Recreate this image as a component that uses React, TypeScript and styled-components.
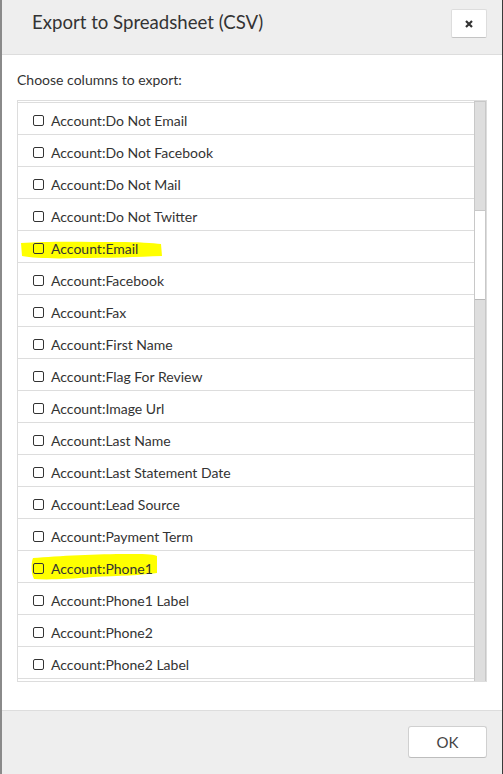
import React from "react";
import styled, { createGlobalStyle } from "styled-components";

const GlobalStyle = createGlobalStyle`
  html, body {
    margin: 0;
    padding: 0;
    background: #6f6f6f;
    font-family: Lato, "Open Sans", "Liberation Sans", sans-serif;
  }
  * { box-sizing: border-box; }
`;

const Page = styled.div`
  width: 503px;
  height: 774px;
  display: flex;
  padding: 0 1px 0 2px;
  background: linear-gradient(to right, #8a8a8a 0 2px, #3a3a3a 2px);
`;

const Dialog = styled.div`
  flex: 1;
  display: flex;
  flex-direction: column;
  background: #ffffff;
`;

const Header = styled.div`
  height: 55px;
  flex: none;
  display: flex;
  align-items: flex-start;
  justify-content: space-between;
  padding: 9px 15px 0 30px;
  background: #eeeeee;
  border-bottom: 1px solid #dddddd;
`;

const Title = styled.h4`
  margin: -1px 0 0;
  font-size: 18.6px;
  line-height: 29px;
  font-weight: 400;
  color: #333333;
`;

const CloseButton = styled.button`
  width: 36px;
  height: 29px;
  padding: 0;
  display: flex;
  align-items: center;
  justify-content: center;
  background: #ffffff;
  border: 1px solid #dddddd;
  border-bottom-color: #c4c4c4;
  border-radius: 2px;
  cursor: pointer;
`;

const Body = styled.div`
  flex: 1;
  display: flex;
  flex-direction: column;
  padding: 15px 15px 0;
`;

const Label = styled.div`
  font-size: 14px;
  line-height: 20px;
  color: #333333;
  margin-bottom: 10px;
`;

const ListBox = styled.div`
  height: 582px;
  display: flex;
  border: 1px solid #dddddd;
`;

const Viewport = styled.div`
  flex: 1;
  overflow: hidden;
`;

const Rows = styled.div`
  margin-top: -30px;
  display: flex;
  flex-direction: column;
`;

const Row = styled.div`
  position: relative;
  height: 32px;
  flex: none;
  display: flex;
  align-items: center;
  gap: 7px;
  padding: 3px 0 0 15px;
  border-bottom: 1px solid #dddddd;
  font-size: 14px;
  color: #333333;
`;

const Box = styled.span`
  position: relative;
  z-index: 1;
  width: 11px;
  height: 11px;
  flex: none;
  border: 1.3px solid #333333;
  border-radius: 2px;
`;

const RowText = styled.span`
  position: relative;
  z-index: 1;
`;

const Marker = styled.svg`
  position: absolute;
  left: 0;
  top: 0;
  width: 100%;
  height: 100%;
  overflow: visible;
  pointer-events: none;
`;

const Scrollbar = styled.div`
  width: 12px;
  flex: none;
  display: flex;
  flex-direction: column;
  background: #dedede;
  border-left: 1px solid #c8c8c8;
  border-right: 1px solid #c8c8c8;
  border-top: 1px solid #c8c8c8;
`;

const Thumb = styled.div`
  margin-top: 108px;
  height: 90px;
  background: #ffffff;
  border-top: 1px solid #c8c8c8;
  border-bottom: 1px solid #b8b8b8;
`;

const Footer = styled.div`
  height: 64px;
  flex: none;
  display: flex;
  justify-content: flex-end;
  align-items: flex-start;
  padding: 15px 15px 0;
  background: #eeeeee;
  border-top: 1px solid #dddddd;
`;

const OkButton = styled.button`
  width: 79px;
  height: 32px;
  background: #ffffff;
  border: 1px solid #d0d0d0;
  border-bottom-color: #bdbdbd;
  border-radius: 3px;
  font-family: Lato, "Open Sans", "Liberation Sans", sans-serif;
  font-size: 15px;
  color: #444444;
  cursor: pointer;
`;

type Highlight = "email" | "phone" | undefined;

const fields: { name: string; mark?: Highlight }[] = [
  { name: "Account:Do Not Call" },
  { name: "Account:Do Not Email" },
  { name: "Account:Do Not Facebook" },
  { name: "Account:Do Not Mail" },
  { name: "Account:Do Not Twitter" },
  { name: "Account:Email", mark: "email" },
  { name: "Account:Facebook" },
  { name: "Account:Fax" },
  { name: "Account:First Name" },
  { name: "Account:Flag For Review" },
  { name: "Account:Image Url" },
  { name: "Account:Last Name" },
  { name: "Account:Last Statement Date" },
  { name: "Account:Lead Source" },
  { name: "Account:Payment Term" },
  { name: "Account:Phone1", mark: "phone" },
  { name: "Account:Phone1 Label" },
  { name: "Account:Phone2" },
  { name: "Account:Phone2 Label" },
  { name: "Account:Phone3" },
];

function MarkerStroke({ kind }: { kind: Highlight }) {
  if (kind === "email") {
    return (
      <Marker aria-hidden>
        <path
          d="M3 12 C30 10 70 11 100 11 C120 11 135 12 143 13 L144 25 C120 26 90 27 60 27 C35 28 15 27 4 25 Z"
          fill="#ffff00"
        />
      </Marker>
    );
  }
  if (kind === "phone") {
    return (
      <Marker aria-hidden>
        <path
          d="M15 7 C40 5 80 3 110 3 C125 3 134 3 139 5 L139 22 C125 24 100 25 75 26 C50 28 30 29 16 28 C13 22 13 12 15 7 Z"
          fill="#ffff00"
        />
      </Marker>
    );
  }
  return null;
}

export default function App() {
  return (
    <>
      <GlobalStyle />
      <Page>
        <Dialog>
          <Header>
            <Title>Export to Spreadsheet (CSV)</Title>
            <CloseButton aria-label="Close">
              <svg width="8" height="8" viewBox="0 0 8 8">
                <path d="M1 1 L7 7 M7 1 L1 7" stroke="#333" strokeWidth="2.2" strokeLinecap="butt" />
              </svg>
            </CloseButton>
          </Header>
          <Body>
            <Label>Choose columns to export:</Label>
            <ListBox>
              <Viewport>
                <Rows>
                  {fields.map((f) => (
                    <Row key={f.name}>
                      <MarkerStroke kind={f.mark} />
                      <Box />
                      <RowText>{f.name}</RowText>
                    </Row>
                  ))}
                </Rows>
              </Viewport>
              <Scrollbar>
                <Thumb />
              </Scrollbar>
            </ListBox>
          </Body>
          <Footer>
            <OkButton>OK</OkButton>
          </Footer>
        </Dialog>
      </Page>
    </>
  );
}
